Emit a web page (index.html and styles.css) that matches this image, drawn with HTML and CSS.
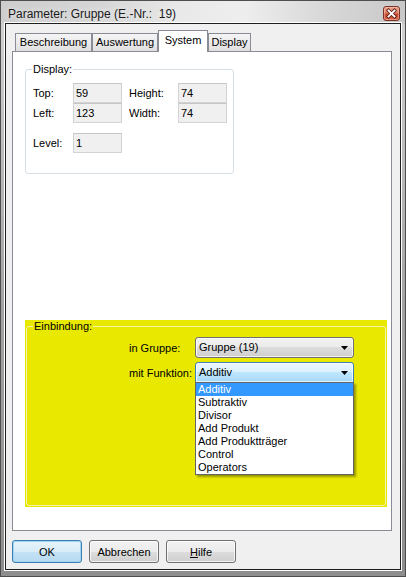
FILE: index.html
```html
<!DOCTYPE html>
<html lang="de">
<head>
<meta charset="utf-8">
<title>Parameter: Gruppe</title>
<link rel="stylesheet" href="styles.css">
</head>
<body>
<div class="window">
  <div class="titlebar">
    <span class="title">Parameter: Gruppe (E.-Nr.:&nbsp; 19)</span>
    <button class="close" type="button" aria-label="Schließen">
      <svg width="15" height="13" viewBox="0 0 15 13">
        <path d="M4.5 3.5 L10.5 9.5 M10.5 3.5 L4.5 9.5" stroke="#5a1a10" stroke-width="3.4" stroke-linecap="square" fill="none"/>
        <path d="M4.5 3.5 L10.5 9.5 M10.5 3.5 L4.5 9.5" stroke="#ffffff" stroke-width="1.8" stroke-linecap="square" fill="none"/>
      </svg>
    </button>
  </div>

  <div class="client">
    <div class="tabs">
      <div class="tab tab-besch">Beschreibung</div>
      <div class="tab tab-ausw">Auswertung</div>
      <div class="tab tab-active">System</div>
      <div class="tab tab-disp">Display</div>
    </div>

    <div class="panel">
      <fieldset class="group group-display">
        <legend>Display:</legend>
        <div class="coords">
          <span class="lbl">Top:</span><span class="field">59</span>
          <span class="lbl">Height:</span><span class="field">74</span>
          <span class="lbl">Left:</span><span class="field">123</span>
          <span class="lbl">Width:</span><span class="field">74</span>
        </div>
        <div class="coords level-row">
          <span class="lbl">Level:</span><span class="field">1</span>
        </div>
      </fieldset>

      <div class="binding">
        <fieldset class="group group-binding">
          <legend>Einbindung:</legend>
          <div class="binding-grid">
            <span class="lbl">in Gruppe:</span>
            <div class="combo">
              <span class="combo-text">Gruppe (19)</span>
              <svg class="arrow" width="7" height="4" viewBox="0 0 7 4"><polygon points="0,0 7,0 3.5,4" fill="#000"/></svg>
            </div>
            <span class="lbl">mit Funktion:</span>
            <div class="combo combo-focus">
              <span class="combo-text">Additiv</span>
              <svg class="arrow" width="7" height="4" viewBox="0 0 7 4"><polygon points="0,0 7,0 3.5,4" fill="#000"/></svg>
              <ul class="droplist">
                <li class="selected">Additiv</li>
                <li>Subtraktiv</li>
                <li>Divisor</li>
                <li>Add Produkt</li>
                <li>Add Produktträger</li>
                <li>Control</li>
                <li>Operators</li>
              </ul>
            </div>
          </div>
        </fieldset>
      </div>
    </div>

    <div class="buttons">
      <button class="btn btn-default" type="button">OK</button>
      <button class="btn" type="button">Abbrechen</button>
      <button class="btn" type="button"><u>H</u>ilfe</button>
    </div>
  </div>
</div>
</body>
</html>
```

FILE: styles.css
```css
* {
  box-sizing: border-box;
}

html, body {
  margin: 0;
  padding: 0;
  background: #8c8c8c;
}

body {
  font-family: "Liberation Sans", Arial, sans-serif;
  font-size: 11px;
  color: #000;
}

/* Window frame (glass look) */
.window {
  width: 406px;
  height: 577px;
  border: 1px solid #4e4e4e;
  padding: 0 4px 6px 4px;
  display: flex;
  flex-direction: column;
  background:
    linear-gradient(to right, #cdcdcd 0%, #d6d6d6 25%, #e9e9e9 45%, #eeeeee 60%, #dadada 78%, #c8c8c8 100%) top left / 100% 23px no-repeat,
    linear-gradient(to bottom, #d5d5d5 0px, #c8c8c8 80px, #a4a4a4 300px, #8e8e8e 100%);
}

.titlebar {
  height: 22px;
  flex: none;
  display: flex;
  align-items: flex-start;
  justify-content: space-between;
  padding-left: 3px;
}

.title {
  font-size: 12px;
  line-height: 14px;
  margin-top: 6px;
  color: #1a1a1a;
  text-shadow: 0 0 6px rgba(255, 255, 255, 0.9);
}

.close {
  width: 17px;
  height: 15px;
  margin-top: 5px;
  margin-right: 1px;
  padding: 0;
  border: 1px solid #7a3023;
  border-radius: 3px;
  background: linear-gradient(to bottom, #eba48f 0%, #dc7e66 45%, #c8442a 55%, #d4654a 100%);
  box-shadow: inset 0 0 0 1px rgba(255, 210, 200, 0.45);
  display: flex;
  align-items: center;
  justify-content: center;
}

.close svg {
  display: block;
}

/* Client area */
.client {
  flex: 1;
  border: 1px solid #1e1e1e;
  box-shadow: 0 0 0 1px #ffffff;
  background: #f0f0f0;
  padding: 6px 8px 6px 6px;
  display: flex;
  flex-direction: column;
}

/* Tabs */
.tabs {
  height: 21px;
  flex: none;
  display: flex;
  align-items: flex-end;
  padding-left: 3px;
}

.tab {
  height: 18px;
  border: 1px solid #898c95;
  border-bottom: none;
  background: linear-gradient(to bottom, #f5f5f5 0%, #ebebeb 50%, #dfdfdf 100%);
  text-align: center;
  line-height: 17px;
  white-space: nowrap;
}

.tab-besch { width: 77px; }
.tab-ausw { width: 66px; }
.tab-disp { width: 43px; }

.tab-active {
  width: 50px;
  height: 22px;
  margin-bottom: -1px;
  background: #ffffff;
  position: relative;
  z-index: 2;
  line-height: 19px;
}

/* Tab page */
.panel {
  flex: 1;
  border: 1px solid #898c95;
  background: #ffffff;
  padding: 11px 4px 23px 12px;
  display: flex;
  flex-direction: column;
  align-items: flex-start;
}

.group {
  margin: 0;
  min-width: 0;
  border: 1px solid #d5dfe5;
  border-radius: 3px;
}

.group legend {
  margin-left: 6px;
  padding: 0 1px;
  font-size: 11px;
  line-height: 13px;
}

.group-display {
  width: 209px;
  padding: 7px 0 20px 0;
}

.coords {
  display: grid;
  grid-template-columns: 40px 56px 49px 49px;
  grid-auto-rows: 20px;
  padding-left: 7px;
}

.level-row {
  margin-top: 10px;
}

.lbl {
  line-height: 20px;
  white-space: nowrap;
}

.field {
  width: 49px;
  height: 20px;
  border: 1px solid #d3d3d3;
  border-top-color: #c6c6c6;
  background: #f0f0f0;
  padding-left: 2px;
  line-height: 18px;
}

/* Yellow binding area */
.binding {
  margin-top: auto;
  width: 362px;
  height: 187px;
  background: #e8e800;
  padding: 0 1px 1px 1px;
}

.group-binding {
  height: 100%;
  border-color: #f4f4a8;
  padding: 4px 0 0 0;
}

.binding-grid {
  display: grid;
  grid-template-columns: 66px 159px;
  grid-auto-rows: 21px;
  row-gap: 4px;
  align-items: center;
  padding-left: 102px;
}

.combo {
  position: relative;
  height: 21px;
  border: 1px solid #707070;
  border-radius: 3px;
  background: linear-gradient(to bottom, #f2f2f2 0%, #ebebeb 50%, #dddddd 50%, #cfcfcf 100%);
  padding: 0 5px 0 3px;
  display: flex;
  align-items: center;
  justify-content: space-between;
  box-shadow: inset 0 0 0 1px rgba(255, 255, 255, 0.7);
}

.combo-text {
  line-height: 19px;
}

.combo-focus {
  border-color: #3c7fb1;
  background: linear-gradient(to bottom, #eaf6fd 0%, #d9f0fc 50%, #bee6fd 50%, #a7d9f5 100%);
  border-radius: 3px 3px 0 0;
}

.arrow {
  display: block;
  margin-top: 1px;
}

/* Open drop-down list */
.droplist {
  position: absolute;
  left: -1px;
  top: 19px;
  width: 159px;
  margin: 0;
  padding: 0;
  list-style: none;
  background: #ffffff;
  border: 1px solid #646464;
  box-shadow: 2px 2px 2px rgba(0, 0, 0, 0.35);
  z-index: 5;
}

.droplist li {
  height: 13px;
  line-height: 13px;
  padding-left: 2px;
  white-space: nowrap;
}

.droplist li.selected {
  background: #3399ff;
  color: #ffffff;
}

/* Dialog buttons */
.buttons {
  flex: none;
  display: flex;
  gap: 7px;
  margin-top: 9px;
}

.btn {
  width: 70px;
  height: 23px;
  padding: 0;
  font-family: "Liberation Sans", Arial, sans-serif;
  font-size: 11px;
  color: #000;
  border: 1px solid #707070;
  border-radius: 3px;
  background: linear-gradient(to bottom, #f2f2f2 0%, #ebebeb 50%, #dddddd 50%, #cfcfcf 100%);
  box-shadow: inset 0 0 0 1px rgba(255, 255, 255, 0.75);
}

.btn-default {
  border-color: #3c7fb1;
  background: linear-gradient(to bottom, #e6f3fb 0%, #d8ecf8 50%, #c4e2f5 50%, #b7daf2 100%);
  box-shadow: inset 0 0 0 1px #9fd4f3;
}
```
